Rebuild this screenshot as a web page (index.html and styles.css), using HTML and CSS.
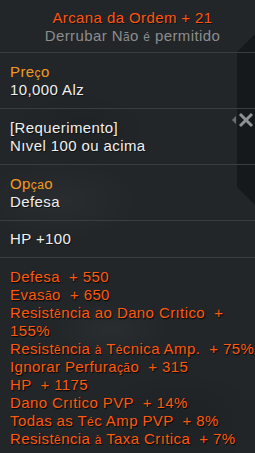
FILE: index.html
```html
<!DOCTYPE html>
<html lang="pt">
<head>
<meta charset="utf-8">
<title>Arcana da Ordem + 21</title>
<link rel="stylesheet" href="styles.css">
</head>
<body>
<div class="tip">
  <div class="deco"></div>
  <div class="close"><svg width="22" height="16" viewBox="0 0 22 16"><path d="M0 8 L4 4 L4 12 Z" fill="#6b6f72"/><path d="M8 2 L20 14 M20 2 L8 14" stroke="#8d9194" stroke-width="3"/></svg></div>
  <div class="content">
    <header class="head">
      <div class="title">Arcana da Ordem + 21</div>
      <div class="sub">Derrubar N<span class="acc">ã</span>o <span class="acc">é</span> permitido</div>
    </header>
    <section class="sec">
      <div class="label">Pre<span class="acc">ç</span>o</div>
      <div class="val">10,000 Alz</div>
    </section>
    <section class="sec">
      <div class="val">[Requerimento]</div>
      <div class="val">Nıvel 100 ou acima</div>
    </section>
    <section class="sec">
      <div class="label">Op<span class="acc">ça</span>o</div>
      <div class="val">Defesa</div>
    </section>
    <section class="sec sec-single">
      <div class="val">HP +100</div>
    </section>
    <section class="sec stats">
      <div class="stat">Defesa  + 550</div>
      <div class="stat">Evas<span class="acc">ã</span>o  + 650</div>
      <div class="stat wrap">Resist<span class="acc">ê</span>ncia ao Dano Crıtico  + 155%</div>
      <div class="stat">Resist<span class="acc">ê</span>ncia <span class="acc">à</span> T<span class="acc">é</span>cnica Amp.  + 75%</div>
      <div class="stat">Ignorar Perfura<span class="acc">çã</span>o  + 315</div>
      <div class="stat">HP  + 1175</div>
      <div class="stat">Dano Crıtico PVP  + 14%</div>
      <div class="stat">Todas as T<span class="acc">é</span>c Amp PVP  + 8%</div>
      <div class="stat">Resist<span class="acc">ê</span>ncia <span class="acc">à</span> Taxa Crıtica  + 7%</div>
    </section>
  </div>
</div>
</body>
</html>
```
FILE: styles.css
```css
html, body {
  margin: 0;
  padding: 0;
  background: #202427;
}
.tip {
  position: relative;
  width: 255px;
  height: 453px;
  overflow: hidden;
  background:
    radial-gradient(ellipse 60px 30px at 110px 330px, rgba(255,255,255,0.035), transparent),
    radial-gradient(ellipse 80px 40px at 60px 200px, rgba(255,255,255,0.03), transparent),
    radial-gradient(ellipse 90px 50px at 180px 420px, rgba(0,0,0,0.12), transparent),
    radial-gradient(ellipse 70px 40px at 80px 130px, rgba(0,0,0,0.1), transparent),
    #222629;
  font-family: "Liberation Sans", Arial, sans-serif;
  font-size: 15px;
  line-height: 18px;
  letter-spacing: 0.4px;
}
.deco {
  position: absolute;
  left: 237px;
  top: 0;
  width: 18px;
  height: 453px;
  background: #16191b;
  clip-path: polygon(0 52px, 18px 34px, 18px 205px, 0 187px);
  z-index: 0;
}
.close {
  position: absolute;
  left: 232px;
  top: 112px;
  width: 22px;
  height: 16px;
  z-index: 0;
}
.close svg { display: block; }
.content {
  position: relative;
  z-index: 1;
}
.head {
  padding: 9px 0 7px 10px;
  text-align: center;
  border-bottom: 1px solid #3a3e41;
}
.title { color: #ff5511; text-shadow: 1px 1px 0 rgba(0,0,0,0.6); }
.sub { color: #8c8d8e; }
.sec {
  padding: 10px 0 9px 10px;
  border-bottom: 1px solid #3a3e41;
}
.sec-single { padding: 9px 0 9px 10px; }
.label { color: #f39a22; }
.val { color: #f0f0f0; text-shadow: 1px 1px 0 rgba(0,0,0,0.5); }
.stats {
  border-bottom: none;
  padding-top: 10px;
}
.stat {
  color: #ff5a10;
  text-shadow: 1px 1px 1px rgba(0,0,0,0.9);
  white-space: pre;
  height: 18px;
}
.stat.wrap {
  white-space: pre-wrap;
  width: 215px;
  height: 36px;
}
.acc { font-size: 12px; line-height: 1; }
```
